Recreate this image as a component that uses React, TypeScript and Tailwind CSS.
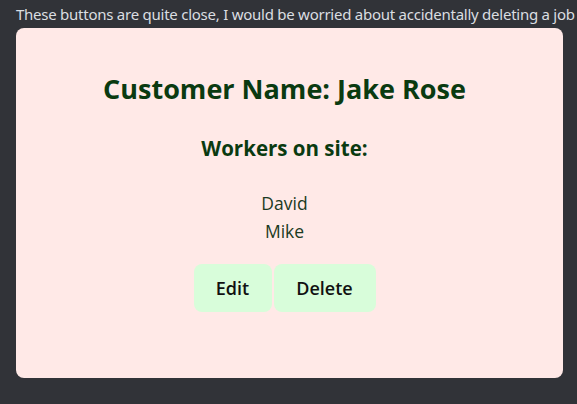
export default function App() {
  return (
    <div className="w-[577px] h-[404px] bg-[#313338] overflow-hidden font-['Open_Sans',sans-serif]">
      <p className="pl-4 pt-[5px] text-[15px] leading-[18px] text-[#dbdee1] whitespace-nowrap font-['Noto_Sans',sans-serif] tracking-[-0.25px]">
        These buttons are quite close, I would be worried about accidentally deleting a job (
      </p>
      <div className="ml-4 mt-[5px] w-[547px] h-[350px] rounded-lg bg-[#ffe9e7] pr-[10px] flex flex-col items-center text-[#0a3a10]">
        <h1 className="mt-[43px] text-[27px] leading-[36px] font-bold">Customer Name: Jake Rose</h1>
        <h2 className="mt-[27px] text-[20.5px] leading-[28px] font-bold">Workers on site:</h2>
        <div className="mt-[27px] flex flex-col items-center text-[17.5px] leading-[28px] text-[#1b3a22]">
          <span>David</span>
          <span>Mike</span>
        </div>
        <div className="mt-[19px] flex gap-[2px]">
          <button className="h-12 w-[78px] rounded-lg bg-[#d8fdda] text-[18px] font-semibold text-[#111]">Edit</button>
          <button className="h-12 w-[102px] rounded-lg bg-[#d8fdda] text-[18px] font-semibold text-[#111]">Delete</button>
        </div>
      </div>
    </div>
  );
}
